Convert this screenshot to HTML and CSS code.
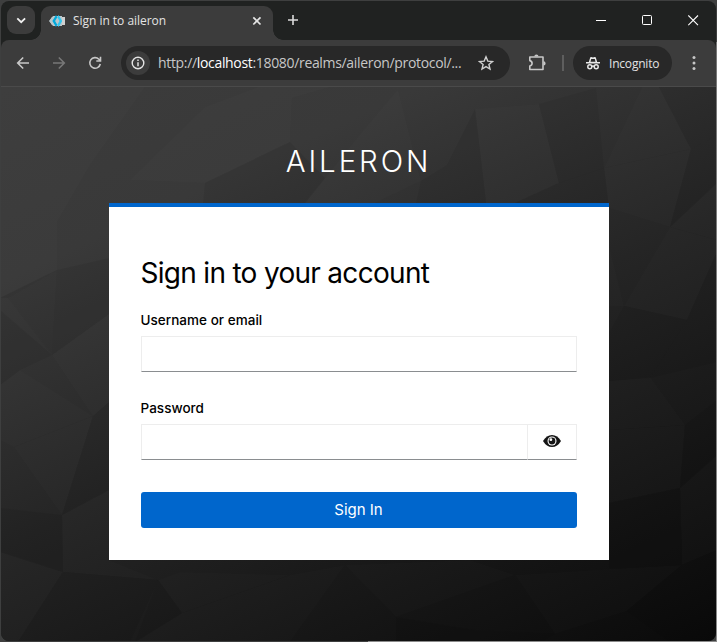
FILE: index.html
```
<!DOCTYPE html>
<html lang="en">
<head>
<meta charset="utf-8">
<title>Sign in to aileron</title>
<link rel="stylesheet" href="styles.css">
</head>
<body>
<div class="window">
  <header class="tabbar">
    <div class="tab-search"><svg width="28" height="28" viewBox="0 0 28 28"><path d="M10.3 12.3l3.9 3.9 3.9-3.9" fill="none" stroke="#f0f0f0" stroke-width="1.8"/></svg></div>
    <div class="tab">
      <svg class="favicon" width="17" height="14" viewBox="0 0 17 14"><path d="M3 3h13v8H3L.5 7z" fill="#d0d0d0"/><path d="M4 2h9v10H4L0 7z" fill="#b8c7cc"/><path d="M7 1L3.400 7 7 13l1.300-2.200L6.100 7l2.200-3.800z" fill="#00a9dc"/><path d="M9.600 1l3.600 6-3.600 6-1.300-2.200L10.500 7 8.300 3.200z" fill="#30c5ef"/></svg>
      <span class="tab-title">Sign in to aileron</span>
      <svg class="tab-close" width="10" height="10" viewBox="0 0 10 10"><path d="M1.300 1.300l7.200 7.200M8.500 1.300L1.300 8.500" stroke="#e3e3e3" stroke-width="1.700"/></svg>
    </div>
    <svg class="new-tab" width="12" height="12" viewBox="0 0 12 12"><path d="M6 1v10M1 6h10" stroke="#dcdcdc" stroke-width="1.600"/></svg>
    <div class="controls">
      <svg width="11" height="11" viewBox="0 0 11 11"><path d="M0 5.500h10" stroke="#fff"/></svg>
      <svg width="11" height="11" viewBox="0 0 11 11"><rect x=".5" y=".5" width="9" height="9" rx="1" fill="none" stroke="#fff"/></svg>
      <svg width="11" height="11" viewBox="0 0 11 11"><path d="M.3 .5l9.700 9.700M10 .5L.3 10.200" stroke="#fff" stroke-width="1.100"/></svg>
    </div>
  </header>
  <nav class="toolbar">
    <svg class="back" width="14" height="14" viewBox="0 0 14 14"><path d="M13 7H2M7.200 1.500L1.700 7l5.500 5.500" fill="none" stroke="#c7c7c7" stroke-width="1.600"/></svg>
    <svg class="forward" width="14" height="14" viewBox="0 0 14 14"><path d="M1 7h11M6.800 1.500L12.300 7l-5.500 5.500" fill="none" stroke="#777" stroke-width="1.600"/></svg>
    <svg class="reload" width="14" height="14" viewBox="0 0 14 14"><path d="M12.300 8A5.300 5.300 0 1 1 10.900 3.200L12.500 4.800M12.500 .8V5H8.300" fill="none" stroke="#c7c7c7" stroke-width="1.600"/></svg>
    <div class="address">
      <span class="info"><svg width="14" height="14" viewBox="0 0 14 14"><circle cx="7" cy="7" r="5.800" fill="none" stroke="#e3e3e3" stroke-width="1.400"/><path d="M7 6.200v4M7 3.600v1.500" stroke="#e3e3e3" stroke-width="1.500"/></svg></span>
      <span class="url">http://<b>localhost</b>:18080/realms/aileron/protocol/...</span>
      <svg class="star" width="16" height="16" viewBox="0 0 16 16"><path d="M8 1.800l1.800 4.300 4.700.4-3.600 3 1.100 4.600L8 11.600l-4 2.500 1.100-4.600-3.600-3 4.700-.4z" fill="none" stroke="#d0d0d0" stroke-width="1.400"/></svg>
    </div>
    <svg class="puzzle" width="18" height="18" viewBox="0 0 18 18"><path d="M1.800 3h13.200v12.500H1.800v-3.500q2.300-.5 2.300-2.700T1.800 6.600z" fill="none" stroke="#c7c7c7" stroke-width="1.600" stroke-linejoin="round"/><path d="M6.300 2.500a2.100 2.100 0 0 1 4.200 0zM15.500 7.300a2.100 2.100 0 0 1 0 4.200z" fill="#c7c7c7"/></svg>
    <span class="divider"></span>
    <div class="incognito">
      <svg width="14" height="14" viewBox="0 0 14 14"><path d="M2.800 6L4.200 1.500q.3-.8 1.100-.5L7 1.500 8.700 1q.8-.3 1.100.5L11.200 6zM0 6h14v1.500H0z" fill="#e8e8e8"/><path d="M5.200 3h3.600l.7 2.700h-5z" fill="#292929"/><circle cx="3.800" cy="10.800" r="2" fill="none" stroke="#e8e8e8" stroke-width="1.500"/><circle cx="10.200" cy="10.800" r="2" fill="none" stroke="#e8e8e8" stroke-width="1.500"/><path d="M5.600 10.400q1.400-.8 2.800 0" fill="none" stroke="#e8e8e8" stroke-width="1.300"/></svg>
      <span class="incognito-label">Incognito</span>
    </div>
    <svg class="menu" width="4" height="16" viewBox="0 0 4 16"><g fill="#c7c7c7"><circle cx="2" cy="2.500" r="1.500"/><circle cx="2" cy="8" r="1.500"/><circle cx="2" cy="13.500" r="1.500"/></g></svg>
  </nav>
  <main class="page">
    <svg class="facets" viewBox="1 87 715 554" preserveAspectRatio="none">
      <g fill="#fff" fill-opacity=".01">
        <path d="M145 87L90 165 57 222 57 270 0 298V87z"/>
        <path d="M258 87L205 107 130 180 205 183 290 142 292 98 330 87z"/>
        <path d="M357 138L398 89 421 181 375 203H305L325 178z"/>
        <path d="M475 109L539 104 559 183 515 203H486z"/>
        <path d="M642 87L604 168 691 149 659 87z"/>
        <path d="M604 168L691 149 670 227 609 208z"/>
        <path d="M670 227L717 183V240z"/>
        <path d="M670 227L624 306 687 320 717 252V240z"/>
        <path d="M609 245L624 306 609 306z"/>
        <path d="M8 298L52 355 57 270z"/>
        <path d="M52 355L109 314V402L93 416z"/>
        <path d="M20 370L93 416 14 447 0 440V385z"/>
        <path d="M14 447L93 416 62 515z"/>
        <path d="M62 515L109 490V560L158 580 63 572z"/>
        <path d="M63 572L0 552V642H18z"/>
        <path d="M158 580L180 572 290 575 182 613z"/>
        <path d="M345 565L290 575 182 613 135 642H290z"/>
        <path d="M345 565L396 617 515 575 470 560z"/>
        <path d="M650 377L685 425 609 430V381z"/>
        <path d="M685 425L680 488 609 503V430z"/>
        <path d="M680 488L717 455V550L682 565z"/>
        <path d="M515 575L609 569 682 565 627 611 555 634z"/>
      </g>
      <g fill="#000" fill-opacity=".06">
        <path d="M205 183L290 142 325 178 305 203H203z"/>
        <path d="M475 109L447 165 421 181 416 203H486z"/>
        <path d="M596 88L604 168 559 183 539 104z"/>
        <path d="M559 183L604 168 609 208 515 203z"/>
        <path d="M659 87L691 149 717 135V87z"/>
        <path d="M717 135L691 149 670 227 717 183z"/>
        <path d="M717 252L687 320 650 378 717 362z"/>
        <path d="M624 306L687 320 650 378 609 381V333z"/>
        <path d="M0 298L57 270 109 258V314L52 355 8 298z"/>
        <path d="M52 355L20 370 0 385V310z"/>
        <path d="M93 416L109 402V490L62 515z"/>
        <path d="M0 508L62 515 63 572 0 552z"/>
        <path d="M63 572L158 580 130 642H18z"/>
        <path d="M158 580L182 613 135 642z"/>
        <path d="M396 617L475 630 555 634 540 642H396z"/>
        <path d="M685 425L717 400V455L680 488z"/>
        <path d="M609 503L680 488 682 565 609 569z"/>
        <path d="M682 565L717 550V642H670L627 611z"/>
      </g>
    </svg>
    <h1 class="realm">AILERON</h1>
    <section class="card">
      <h2 class="heading">Sign in to your account</h2>
      <form class="form">
        <label class="label label-user" for="username">Username or email</label>
        <input class="field" id="username" type="text">
        <label class="label label-password" for="password">Password</label>
        <div class="group">
          <input class="field" id="password" type="password">
          <button class="reveal" type="button" aria-label="Show password"><svg width="18" height="12" viewBox="0 0 18 12"><path d="M0 6Q3.500 0 9 0t9 6q-3.500 6-9 6T0 6z" fill="#151515"/><circle cx="9" cy="6" r="4.500" fill="#fff"/><circle cx="9" cy="6" r="3.400" fill="#151515"/><circle cx="7.900" cy="4.700" r="1.400" fill="#fff"/></svg></button>
        </div>
        <button class="submit" type="button">Sign In</button>
      </form>
    </section>
  </main>
</div>
</body>
</html>
```
FILE: styles.css
```
* { box-sizing: border-box; }
html, body { margin: 0; height: 100%; overflow: hidden; }
body {
  padding: 1px;
  background:
    linear-gradient(#8b8b8b, #8b8b8b) 100% 100% / 349px 1px no-repeat,
    linear-gradient(#777, #8b8b8b) 100% 100% / 1px 600px no-repeat,
    #3e3f3f;
  font-family: "Open Sans", "Noto Sans", sans-serif;
}
svg { display: block; flex: none; }
.window {
  height: 640px;
  display: flex;
  flex-direction: column;
  overflow: hidden;
  border-radius: 8px;
  background: #202221;
}
.tabbar { height: 39px; flex: none; display: flex; align-items: flex-start; padding: 5px 0 0 6px; }
.tab-search { width: 28px; height: 28px; border-radius: 9px; background: #3c3c3c; }
.tab {
  width: 232px;
  height: 34px;
  margin-left: 6px;
  padding: 0 11px 5px 8px;
  display: flex;
  align-items: center;
  background: #3c3c3c;
  border-radius: 9px 9px 0 0;
  position: relative;
}
.tab::before, .tab::after {
  content: "";
  position: absolute;
  bottom: 0;
  width: 10px;
  height: 10px;
}
.tab::before { left: -10px; background: radial-gradient(circle at 0 0, transparent 9.5px, #3c3c3c 10px); }
.tab::after { right: -10px; background: radial-gradient(circle at 100% 0, transparent 9.5px, #3c3c3c 10px); }
.tab-title { margin-left: 7px; font-size: 12px; line-height: 16px; color: #e3e3e3; white-space: nowrap; letter-spacing: -.03px; }
.tab-close { margin-left: auto; }
.new-tab { margin: 8px 0 0 14px; }
.controls { margin: 9px 17px 0 auto; display: flex; gap: 35px; }
.toolbar {
  height: 46px;
  flex: none;
  display: flex;
  align-items: center;
  padding: 0 20px 0 15px;
  background: #3c3c3c;
  border-radius: 8px 8px 0 0;
}
.forward { margin-left: 22px; }
.reload { margin-left: 22px; }
.address {
  width: 389px;
  height: 34px;
  margin-left: 19px;
  padding: 0 16px 0 5px;
  display: flex;
  align-items: center;
  border-radius: 17px;
  background: #282828;
}
.info { width: 24px; height: 24px; border-radius: 50%; background: #3c3c3c; display: grid; place-items: center; }
.url { margin-left: 8px; font-size: 14px; line-height: 20px; color: #c7c7c7; white-space: nowrap; letter-spacing: -.33px; }
.url b { font-weight: 400; color: #fff; }
.star { margin-left: auto; }
.puzzle { margin-left: 18px; }
.divider { width: 2px; height: 16px; margin-left: 16px; background: #5e5e5e; }
.incognito {
  width: 99px;
  height: 34px;
  margin-left: 9px;
  padding-left: 13px;
  display: flex;
  align-items: center;
  border-radius: 17px;
  background: #282828;
}
.incognito-label { margin-left: 9px; font-size: 12px; color: #e3e3e3; letter-spacing: -.2px; }
.menu { margin-left: auto; }
.page {
  flex: 1;
  position: relative;
  display: flex;
  flex-direction: column;
  align-items: center;
  border-top: 1px solid #4a4a4a;
  background: linear-gradient(155deg, #3c3c3c 0%, #393939 22%, #252525 52%, #161616 78%, #0a0a0a 100%);
  font-family: Inter, "Open Sans", sans-serif;
}
.facets { position: absolute; inset: 0; width: 100%; height: 100%; }
.realm {
  position: relative;
  margin: 56px 0 0;
  height: 60px;
  font-size: 29.5px;
  line-height: 36px;
  font-weight: 300;
  letter-spacing: 2.9px;
  color: #fff;
}
.card {
  position: relative;
  width: 500px;
  height: 357px;
  padding: 46px 32px 32px;
  border-top: 4px solid #06c;
  background: #fff;
}
.heading { margin: 0; font-size: 28px; line-height: 40px; font-weight: 400; letter-spacing: -.7px; color: #000; white-space: nowrap; }
.form { display: flex; flex-direction: column; }
.label { font-size: 13.5px; line-height: 20px; font-weight: 500; letter-spacing: .03px; color: #000; }
.label-user { margin-top: 17px; }
.label-password { margin-top: 26px; }
.field {
  width: 436px;
  height: 36px;
  margin: 6px 0 0;
  padding: 0 8px;
  border: 1px solid #ededed;
  border-bottom-color: #8a8d90;
  border-radius: 0;
  background: #fff;
  outline: 0;
}
.group { display: flex; margin-top: 6px; }
.group .field { width: 386px; margin: 0; border-right: 0; }
.reveal {
  width: 50px;
  height: 36px;
  padding: 0 0 2px;
  display: grid;
  place-items: center;
  border: 1px solid #ededed;
  border-bottom-color: #8a8d90;
  background: #fff;
}
.submit {
  height: 36px;
  margin-top: 32px;
  padding: 0 0 1px;
  border: 0;
  border-radius: 3px;
  background: #06c;
  color: #fff;
  font: 400 15px/24px Inter, "Open Sans", sans-serif;
}
```
